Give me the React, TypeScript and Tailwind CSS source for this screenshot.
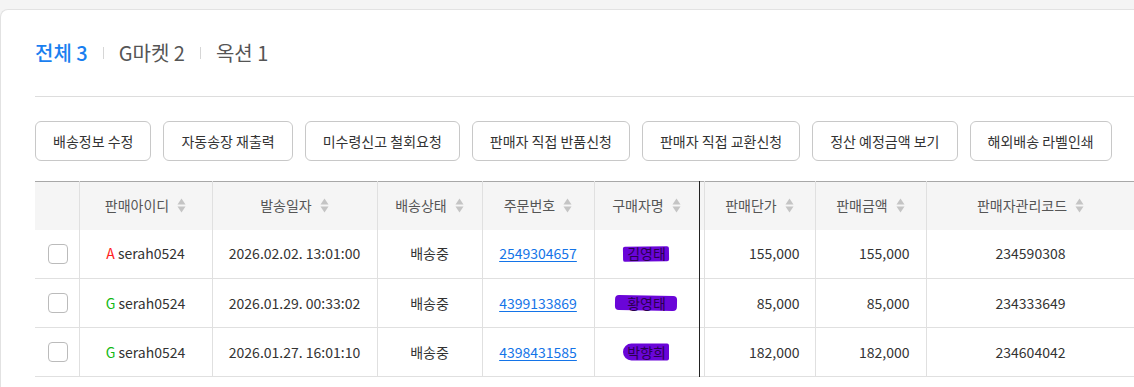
import React from 'react'

const font = { fontFamily: '"Noto Sans CJK KR", "Noto Sans", sans-serif' }

const actions = [
  '배송정보 수정',
  '자동송장 재출력',
  '미수령신고 철회요청',
  '판매자 직접 반품신청',
  '판매자 직접 교환신청',
  '정산 예정금액 보기',
  '해외배송 라벨인쇄',
]

interface OrderRow {
  market: 'A' | 'G'
  seller: string
  sentAt: string
  status: string
  orderNo: string
  buyer: string
  unitPrice: string
  amount: string
  code: string
}

const rows: OrderRow[] = [
  { market: 'A', seller: 'serah0524', sentAt: '2026.02.02. 13:01:00', status: '배송중', orderNo: '2549304657', buyer: '김영태', unitPrice: '155,000', amount: '155,000', code: '234590308' },
  { market: 'G', seller: 'serah0524', sentAt: '2026.01.29. 00:33:02', status: '배송중', orderNo: '4399133869', buyer: '황영태', unitPrice: '85,000', amount: '85,000', code: '234333649' },
  { market: 'G', seller: 'serah0524', sentAt: '2026.01.27. 16:01:10', status: '배송중', orderNo: '4398431585', buyer: '박향희', unitPrice: '182,000', amount: '182,000', code: '234604042' },
]

function SortIcon() {
  return (
    <svg width="9" height="15" viewBox="0 0 9 15" className="ml-[8px] shrink-0">
      <path d="M4.5 0.5 L8.5 6.5 H0.5 Z" fill="#c4c4c4" />
      <path d="M4.5 14.5 L8.5 8.5 H0.5 Z" fill="#c4c4c4" />
    </svg>
  )
}

function HeadCell({ label }: { label: string }) {
  return (
    <th className="h-[48px] border-r border-[#e0e0e0] bg-[#f5f5f5] p-0 font-normal">
      <div className="flex items-center justify-center text-[14px] text-[#555]">
        {label}
        <SortIcon />
      </div>
    </th>
  )
}

// 마커로 가린 구매자명
const blots = [
  'w-[46px] h-[15px] rounded-[2px] -rotate-1',
  'w-[62px] h-[15px] rounded-[4px] rotate-1',
  'w-[46px] h-[17px] rounded-l-[9px] rounded-r-[2px]',
]

export default function App() {
  return (
    <div className="h-[387px] w-full overflow-hidden bg-[#f4f4f4] pt-[9px]" style={font}>
      <div className="h-full overflow-hidden rounded-tl-[8px] border-t border-l border-[#e2e2e2] bg-white pl-[34px]">
        {/* 탭 */}
        <div className="flex h-[87px] w-[1200px] items-center border-b border-[#dddddd]">
          <div className="-mt-[1px] flex items-center text-[20px] text-[#555]">
            <span className="font-medium text-[#1a7ff0]">전체 3</span>
            <span className="mx-[15px] h-[12px] w-px bg-[#d6d6d6]" />
            <span>G마켓 2</span>
            <span className="mx-[15px] h-[12px] w-px bg-[#d6d6d6]" />
            <span>옥션 1</span>
          </div>
          <div className="ml-auto h-[36px] w-[68px] rounded-[6px] border border-[#cccccc]" />
        </div>

        {/* 액션 버튼 */}
        <div className="mt-[24px] flex gap-[12px]">
          {actions.map(a => (
            <button
              key={a}
              className="h-[40px] shrink-0 rounded-[6px] border border-[#c8c8c8] bg-white px-[17px] text-[14px] text-[#333]"
            >
              {a}
            </button>
          ))}
        </div>

        {/* 주문 목록 */}
        <table className="mt-[20px] w-[1310px] table-fixed border-collapse border-t border-[#a8a8a8]">
          <colgroup>
            <col className="w-[44px]" />
            <col className="w-[133px]" />
            <col className="w-[165px]" />
            <col className="w-[105px]" />
            <col className="w-[112px]" />
            <col className="w-[105px]" />
            <col className="w-[5px]" />
            <col className="w-[111px]" />
            <col className="w-[111px]" />
            <col className="w-[419px]" />
          </colgroup>
          <thead>
            <tr>
              <th className="border-r border-[#e0e0e0] bg-[#f5f5f5]" />
              <HeadCell label="판매아이디" />
              <HeadCell label="발송일자" />
              <HeadCell label="배송상태" />
              <HeadCell label="주문번호" />
              <th className="h-[48px] border-r border-r-[#222] bg-[#f5f5f5] p-0 font-normal">
                <div className="flex items-center justify-center text-[14px] text-[#555]">
                  구매자명
                  <SortIcon />
                </div>
              </th>
              <th className="border-r border-[#e0e0e0] bg-[#f5f5f5]" />
              <HeadCell label="판매단가" />
              <HeadCell label="판매금액" />
              <th className="h-[48px] bg-[#f5f5f5] p-0 font-normal">
                <div className="flex w-[208px] items-center justify-center text-[14px] text-[#555]">
                  판매자관리코드
                  <SortIcon />
                </div>
              </th>
            </tr>
          </thead>
          <tbody className="text-[14px] text-[#333]">
            {rows.map((r, i) => (
              <tr key={r.orderNo} className="h-[49px] border-b border-[#e0e0e0]">
                <td className="border-r border-[#e0e0e0] p-0">
                  <div className="ml-[13px] h-[20px] w-[20px] rounded-[4px] border border-[#bbbbbb] bg-white" />
                </td>
                <td className="border-r border-[#e0e0e0] p-0 text-center">
                  <span className={r.market === 'A' ? 'text-[#ff1e1e]' : 'text-[#12b812]'}>{r.market}</span> {r.seller}
                </td>
                <td className="border-r border-[#e0e0e0] p-0 text-center">{r.sentAt}</td>
                <td className="border-r border-[#e0e0e0] p-0 text-center">{r.status}</td>
                <td className="border-r border-[#e0e0e0] p-0 text-center">
                  <span className="text-[#1474e8] underline underline-offset-2">{r.orderNo}</span>
                </td>
                <td className="border-r border-r-[#222] p-0 text-center">
                  <span className="relative inline-block px-[4px] text-[#2a0050]">
                    <span className={`absolute left-1/2 top-1/2 -translate-x-1/2 -translate-y-1/2 bg-[#6a05d8] ${blots[i]}`} />
                    <span className="relative">{r.buyer}</span>
                  </span>
                </td>
                <td className="border-r border-[#e0e0e0] p-0" />
                <td className="border-r border-[#e0e0e0] p-0 pr-[15px] text-right">{r.unitPrice}</td>
                <td className="border-r border-[#e0e0e0] p-0 pr-[16px] text-right">{r.amount}</td>
                <td className="p-0">
                  <div className="w-[208px] text-center">{r.code}</div>
                </td>
              </tr>
            ))}
          </tbody>
        </table>
      </div>
    </div>
  )
}
